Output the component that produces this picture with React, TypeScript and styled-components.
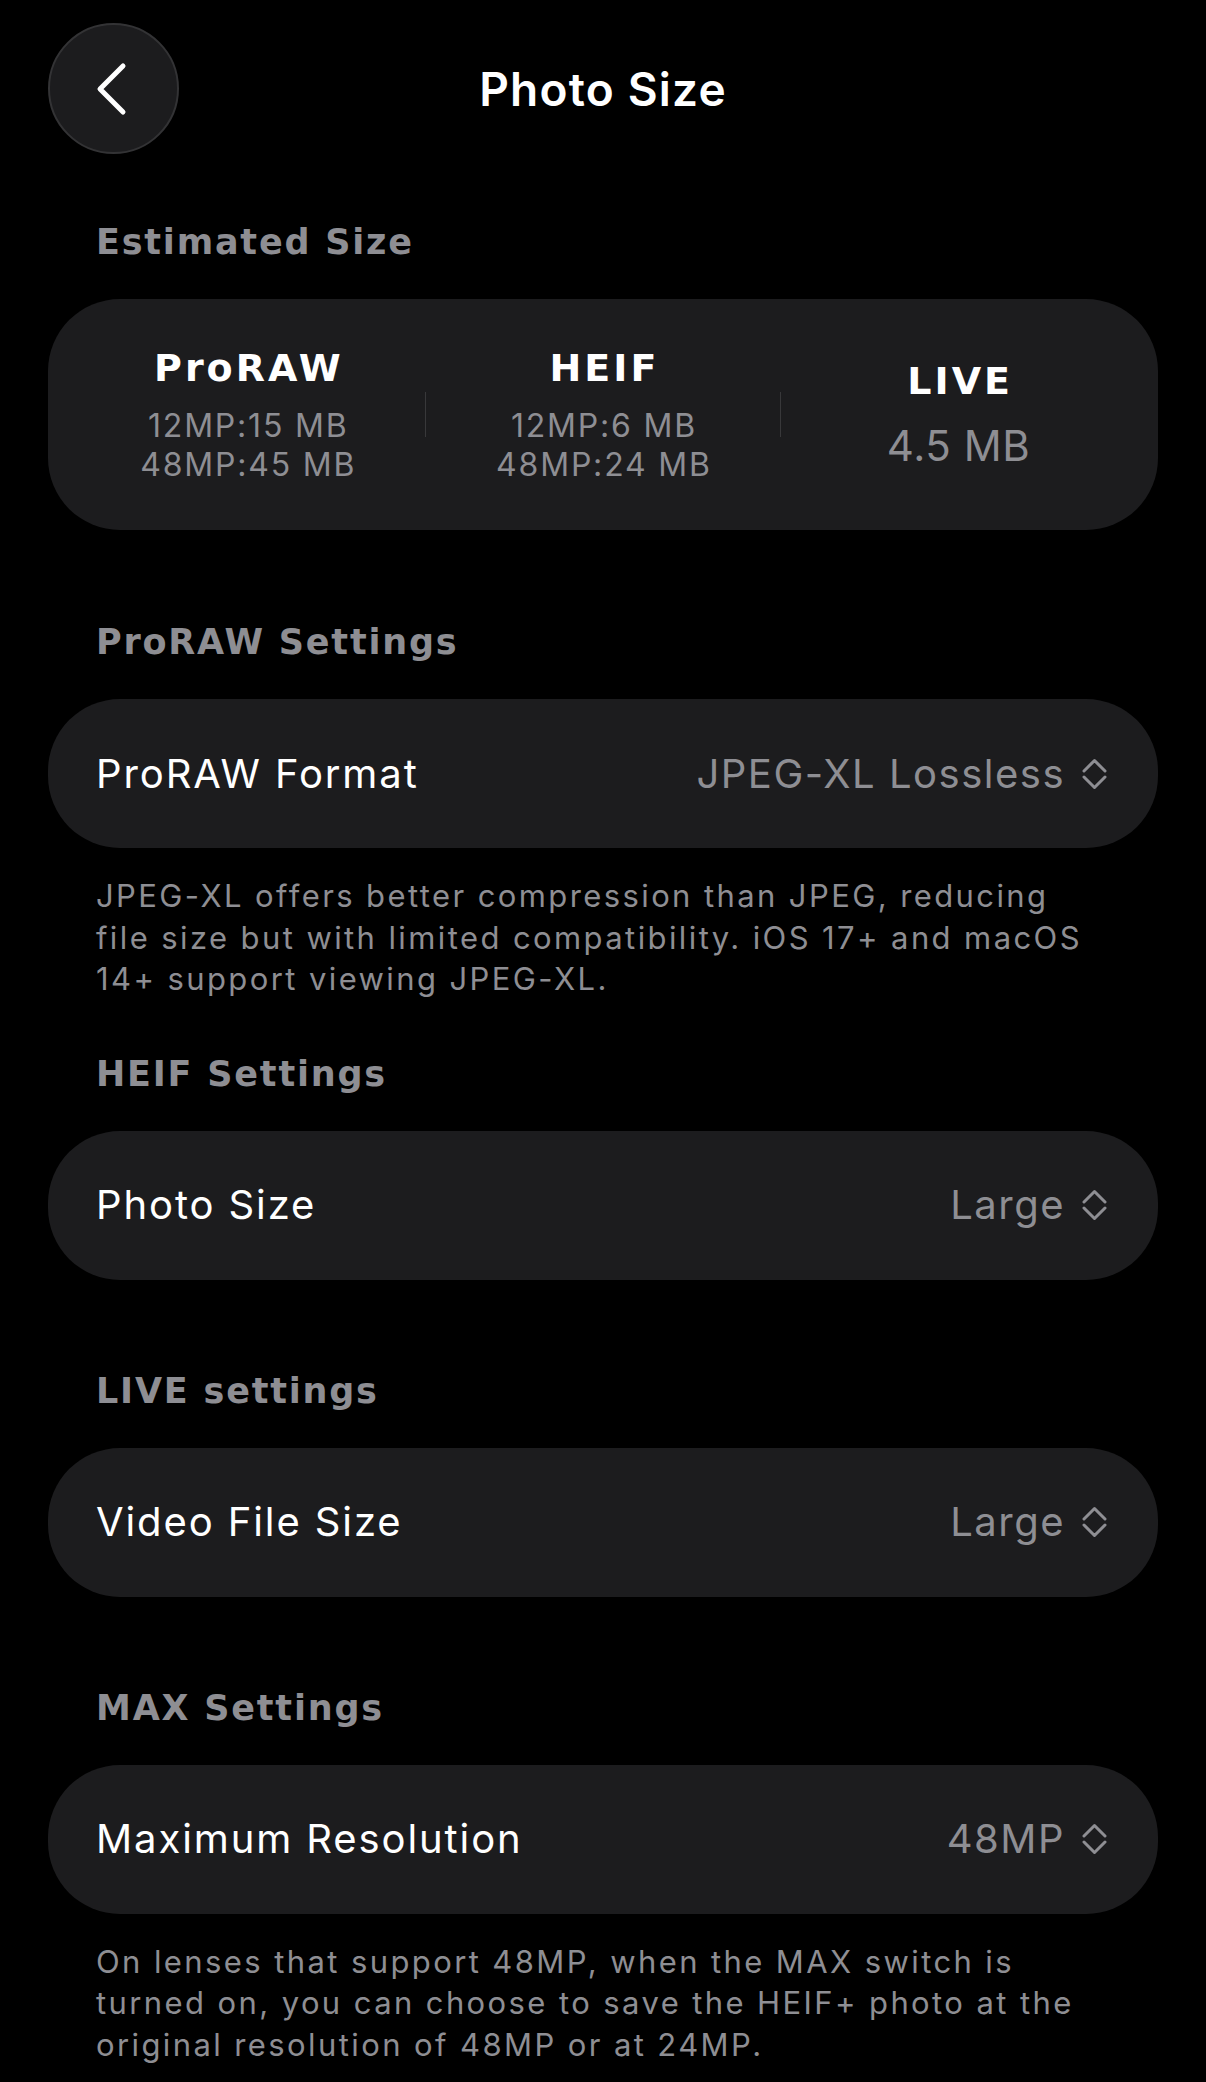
import React from "react";
import styled, { createGlobalStyle } from "styled-components";

const GlobalStyle = createGlobalStyle`
  html, body {
    margin: 0;
    padding: 0;
    background: #000;
  }
  body {
    font-family: Inter, "Noto Sans", "Liberation Sans", sans-serif;
    -webkit-font-smoothing: antialiased;
  }
  * { box-sizing: border-box; }
`;

const Page = styled.div`
  width: 1206px;
  min-height: 2082px;
  background: #000;
  padding: 23px 48px 0 48px;
  display: flex;
  flex-direction: column;
`;

const Header = styled.header`
  display: grid;
  grid-template-columns: 131px 1fr 131px;
  align-items: center;
  height: 131px;
`;

const BackButton = styled.button`
  width: 131px;
  height: 131px;
  border-radius: 50%;
  background: #1c1c1e;
  border: 2px solid #333335;
  display: flex;
  align-items: center;
  justify-content: center;
  padding: 0 6px 0 0;
  cursor: pointer;
`;

const Title = styled.h1`
  margin: 0;
  text-align: center;
  color: #fff;
  font-size: 46px;
  line-height: 56px;
  font-weight: 600;
  letter-spacing: 1.2px;
`;

const Section = styled.section<{ $top: number }>`
  margin-top: ${(p) => p.$top}px;
  display: flex;
  flex-direction: column;
`;

const SectionTitle = styled.h2<{ $gap: number }>`
  margin: 0 0 ${(p) => p.$gap}px 0;
  padding-left: 48px;
  font-family: "DejaVu Sans", "Noto Sans", sans-serif;
  font-size: 35px;
  line-height: 40px;
  font-weight: 700;
  color: #8e8e93;
  letter-spacing: 1.8px;
`;

const SizeCard = styled.div`
  height: 231px;
  border-radius: 72px;
  background: #1c1c1e;
  padding: 0 22px;
  display: grid;
  grid-template-columns: 1fr 1px 1fr 1px 1fr;
  align-items: center;
`;

const SizeColumn = styled.div`
  display: flex;
  flex-direction: column;
  align-items: center;
`;

const Divider = styled.div`
  width: 1px;
  height: 45px;
  background: #38383a;
`;

const FormatName = styled.div<{ $gap: number }>`
  font-family: "DejaVu Sans", "Noto Sans", sans-serif;
  font-weight: 700;
  font-size: 38px;
  line-height: 44px;
  letter-spacing: 3px;
  padding-left: 3px;
  color: #fff;
  margin-bottom: ${(p) => p.$gap}px;
`;

const SizeLine = styled.div`
  font-size: 32px;
  line-height: 39px;
  letter-spacing: 1.8px;
  padding-left: 1.8px;
  color: #8e8e93;
`;

const SizeBig = styled.div`
  font-size: 42px;
  line-height: 48px;
  letter-spacing: 0.6px;
  color: #8e8e93;
`;

const Row = styled.div`
  height: 149px;
  border-radius: 72px;
  background: #1c1c1e;
  padding: 0 51px 0 48px;
  display: flex;
  align-items: center;
  justify-content: space-between;
`;

const RowLabel = styled.span`
  font-size: 40px;
  line-height: 48px;
  letter-spacing: 1.9px;
  color: #fff;
`;

const RowValue = styled.span`
  display: flex;
  align-items: center;
  gap: 17px;
  font-size: 40px;
  line-height: 48px;
  letter-spacing: 1.5px;
  color: #8e8e93;
`;

const Description = styled.p`
  margin: 27px 0 0 0;
  padding: 0 10px 0 48px;
  font-size: 31px;
  line-height: 41.5px;
  color: #8e8e93;
  letter-spacing: 2.4px;
`;

const ChevronLeft = () => (
  <svg width="34" height="54" viewBox="0 0 34 54" fill="none">
    <path
      d="M29 4 L6 27 L29 50"
      stroke="#fff"
      strokeWidth="5"
      strokeLinecap="round"
      strokeLinejoin="round"
    />
  </svg>
);

const UpDown = () => (
  <svg width="25" height="34" viewBox="0 0 25 34" fill="none">
    <path
      d="M2 14 L12.5 3.5 L23 14 M2 20 L12.5 30.5 L23 20"
      stroke="#8e8e93"
      strokeWidth="3"
      strokeLinecap="round"
      strokeLinejoin="round"
    />
  </svg>
);

const SettingRow = ({ label, value }: { label: string; value: string }) => (
  <Row>
    <RowLabel>{label}</RowLabel>
    <RowValue>
      {value}
      <UpDown />
    </RowValue>
  </Row>
);

export default function App() {
  return (
    <>
      <GlobalStyle />
      <Page>
        <Header>
          <BackButton aria-label="Back">
            <ChevronLeft />
          </BackButton>
          <Title>Photo Size</Title>
          <span />
        </Header>

        <Section $top={68}>
          <SectionTitle $gap={37}>Estimated Size</SectionTitle>
          <SizeCard>
            <SizeColumn>
              <FormatName $gap={16}>ProRAW</FormatName>
              <SizeLine>12MP:15 MB</SizeLine>
              <SizeLine>48MP:45 MB</SizeLine>
            </SizeColumn>
            <Divider />
            <SizeColumn>
              <FormatName $gap={16}>HEIF</FormatName>
              <SizeLine>12MP:6 MB</SizeLine>
              <SizeLine>48MP:24 MB</SizeLine>
            </SizeColumn>
            <Divider />
            <SizeColumn>
              <FormatName $gap={19}>LIVE</FormatName>
              <SizeBig>4.5 MB</SizeBig>
            </SizeColumn>
          </SizeCard>
        </Section>

        <Section $top={92}>
          <SectionTitle $gap={37}>ProRAW Settings</SectionTitle>
          <SettingRow label="ProRAW Format" value="JPEG-XL Lossless" />
          <Description>
            JPEG-XL offers better compression than JPEG, reducing
            <br />
            file size but with limited compatibility. iOS 17+ and macOS
            <br />
            14+ support viewing JPEG-XL.
          </Description>
        </Section>

        <Section $top={54}>
          <SectionTitle $gap={37}>HEIF Settings</SectionTitle>
          <SettingRow label="Photo Size" value="Large" />
        </Section>

        <Section $top={91}>
          <SectionTitle $gap={37}>LIVE settings</SectionTitle>
          <SettingRow label="Video File Size" value="Large" />
        </Section>

        <Section $top={91}>
          <SectionTitle $gap={37}>MAX Settings</SectionTitle>
          <SettingRow label="Maximum Resolution" value="48MP" />
          <Description>
            On lenses that support 48MP, when the MAX switch is
            <br />
            turned on, you can choose to save the HEIF+ photo at the
            <br />
            original resolution of 48MP or at 24MP.
          </Description>
        </Section>
      </Page>
    </>
  );
}
